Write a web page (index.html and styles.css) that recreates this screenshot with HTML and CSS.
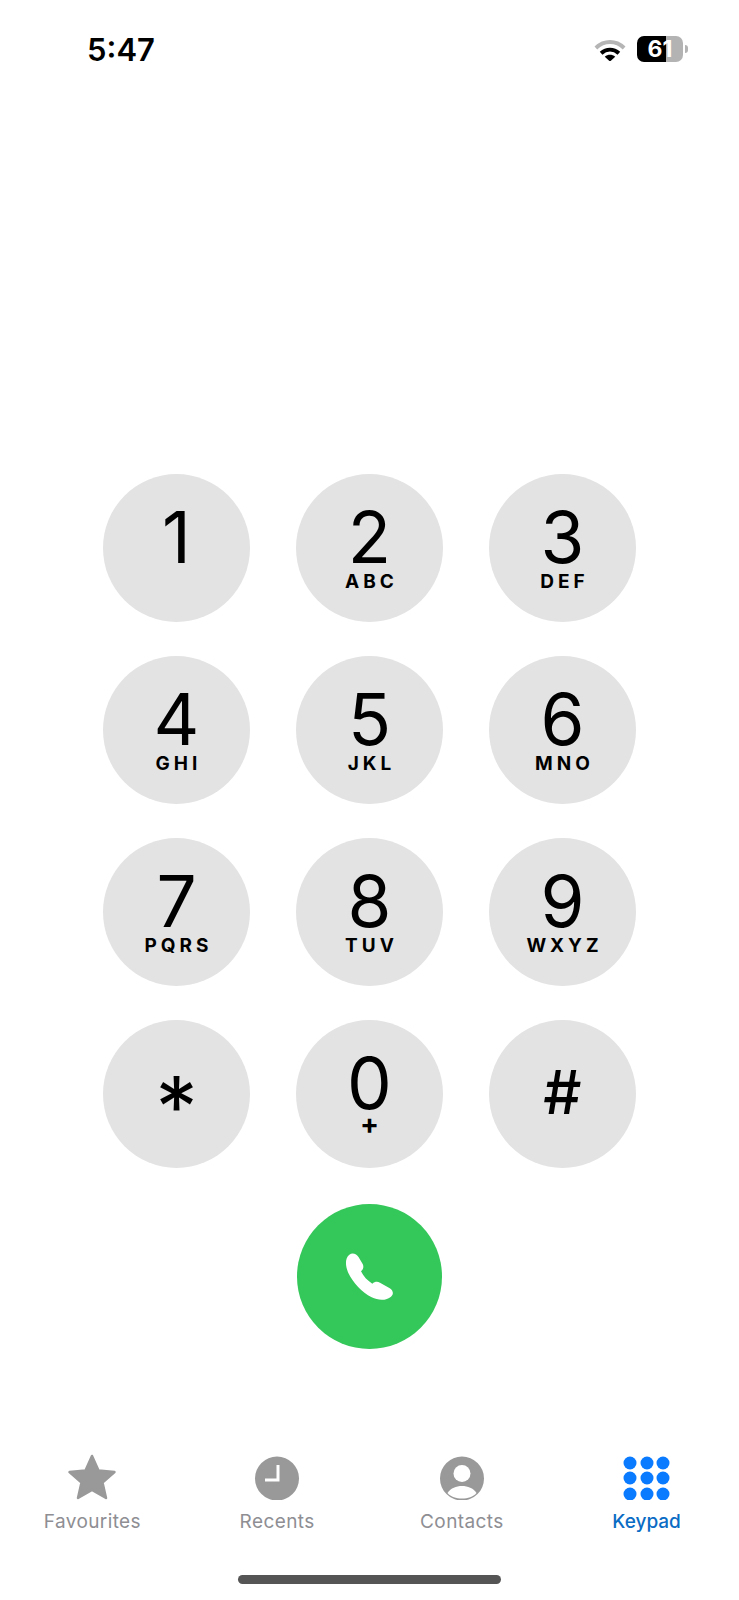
FILE: index.html
```html
<!DOCTYPE html>
<html lang="en">
<head>
    <title>Keypad</title>
    <meta charset="utf-8"/>
    <link rel="stylesheet" href="styles.css">
</head>
<body>

<div class="status-bar">
    <span class="time">5:47</span>
    <div class="status-icons">
        <svg class="wifi" viewBox="0 0 30 22">
            <path d="M1.500 9.500C9.500 2 20.500 2 28.500 9.500" fill="none" stroke="#b5b5b5" stroke-width="3.800"/>
            <path d="M6.500 14.500C11.500 10 18.500 10 23.500 14.500" fill="none" stroke="#000" stroke-width="3.800"/>
            <path d="M10 18C13 15.500 17 15.500 20 18L15 22.500z" fill="#000"/>
        </svg>
        <div class="battery">61</div>
        <span class="battery-nub"></span>
    </div>
</div>

<div class="keypad">
    <button class="key"><span class="digit">1</span></button>
    <button class="key"><span class="digit">2</span><span class="letters">ABC</span></button>
    <button class="key"><span class="digit">3</span><span class="letters">DEF</span></button>
    <button class="key"><span class="digit">4</span><span class="letters">GHI</span></button>
    <button class="key"><span class="digit">5</span><span class="letters">JKL</span></button>
    <button class="key"><span class="digit">6</span><span class="letters">MNO</span></button>
    <button class="key"><span class="digit">7</span><span class="letters">PQRS</span></button>
    <button class="key"><span class="digit">8</span><span class="letters">TUV</span></button>
    <button class="key"><span class="digit">9</span><span class="letters">WXYZ</span></button>
    <button class="key"><span class="digit star">*</span></button>
    <button class="key"><span class="digit">0</span><span class="letters plus">+</span></button>
    <button class="key"><span class="digit hash">#</span></button>
</div>

<button class="call">
    <svg class="call-icon" viewBox="165 172 150 150">
        <path d="M178 180C188 172 200 178 206 188L218 208C222 216 220 224 213 230C220 245 232 258 247 267C254 261 262 260 270 264L298 280C310 287 312 298 303 306C290 318 265 318 245 308C215 292 190 265 175 235C165 212 165 190 178 180Z" fill="#fff"/>
    </svg>
</button>

<div class="tabs">
    <div class="tab">
        <svg class="tab-icon" viewBox="0 0 50 46">
            <path d="M25 2L31.500 16.500L47.500 18L35.500 28.500L39 44L25 36L11 44L14.500 28.500L2.500 18L18.500 16.500Z" fill="#999" stroke="#999" stroke-width="2.500" stroke-linejoin="round"/>
        </svg>
        <span>Favourites</span>
    </div>
    <div class="tab">
        <svg class="tab-icon" viewBox="0 0 50 46">
            <circle cx="25" cy="24.500" r="22" fill="#999"/>
            <path d="M26 11V26H13" fill="none" stroke="#fff" stroke-width="3"/>
        </svg>
        <span>Recents</span>
    </div>
    <div class="tab">
        <svg class="tab-icon" viewBox="0 0 50 46">
            <circle cx="25" cy="24.500" r="22" fill="#999"/>
            <circle cx="25" cy="19.500" r="8.500" fill="#fff"/>
            <path d="M10.500 39C14 34 19 32 25 32S36 34 39.500 39C36 43 31 44.500 25 44.500S14 43 10.500 39Z" fill="#fff"/>
        </svg>
        <span>Contacts</span>
    </div>
    <div class="tab active">
        <svg class="tab-icon" viewBox="0 0 50 46">
            <g fill="#0a7aff">
                <circle cx="8" cy="9" r="6.500"/><circle cx="25" cy="9" r="6.500"/><circle cx="41" cy="9" r="6.500"/>
                <circle cx="8" cy="24" r="6.500"/><circle cx="25" cy="24" r="6.500"/><circle cx="41" cy="24" r="6.500"/>
                <circle cx="8" cy="40" r="6.500"/><circle cx="25" cy="40" r="6.500"/><circle cx="41" cy="40" r="6.500"/>
            </g>
        </svg>
        <span>Keypad</span>
    </div>
</div>

<div class="home-bar"></div>

</body>
</html>
```

FILE: styles.css
```css
body {
    margin: 0;
    width: 739px;
    height: 1600px;
    overflow: hidden;
    background: #fff;
    color: #000;
    font-family: Inter, "Liberation Sans", sans-serif;
}

button {
    border: none;
    padding: 0;
    font-family: inherit;
    color: inherit;
}

.status-bar {
    display: flex;
    justify-content: space-between;
    align-items: center;
    height: 62px;
    padding: 18px 51px 0 87px;
}

.time {
    font-size: 31px;
    font-weight: 600;
}

.status-icons {
    display: flex;
    align-items: center;
}

.wifi {
    width: 32px;
    height: 23px;
    margin-right: 11px;
}

.battery {
    width: 46px;
    height: 26px;
    border-radius: 7px;
    background: linear-gradient(90deg, #000 63%, #b3b3b3 63%);
    color: #fff;
    font-size: 23px;
    font-weight: 700;
    line-height: 26px;
    text-align: center;
}

.battery-nub {
    width: 3px;
    height: 8px;
    margin-left: 2px;
    border-radius: 0 3px 3px 0;
    background: #b3b3b3;
}

.keypad {
    display: grid;
    grid-template-columns: repeat(3, 147px);
    grid-auto-rows: 148px;
    column-gap: 46px;
    row-gap: 34px;
    justify-content: center;
    margin-top: 394px;
}

.key {
    display: flex;
    flex-direction: column;
    align-items: center;
    padding-top: 27px;
    border-radius: 50%;
    background: #e3e3e3;
}

.digit {
    font-size: 71px;
    font-weight: 400;
    line-height: 72px;
}

.digit.star {
    margin-top: 24px;
    font-size: 84px;
}

.digit.hash {
    margin-top: 9px;
    font-size: 60px;
    font-weight: 500;
}

.letters {
    margin-top: -2px;
    margin-right: -4px;
    font-size: 19px;
    font-weight: 700;
    line-height: 22px;
    letter-spacing: 4px;
}

.letters.plus {
    margin-top: -6px;
    margin-right: 0;
    letter-spacing: 0;
    font-size: 28px;
}

.call {
    display: flex;
    align-items: center;
    justify-content: center;
    width: 145px;
    height: 145px;
    margin: 36px auto 0;
    border-radius: 50%;
    background: #34c759;
}

.call-icon {
    width: 50px;
    height: 50px;
}

.tabs {
    display: grid;
    grid-template-columns: repeat(4, 1fr);
    margin-top: 105px;
}

.tab {
    display: flex;
    flex-direction: column;
    align-items: center;
    color: #8e8e93;
    font-size: 19px;
    letter-spacing: 0.4px;
    line-height: 24px;
}

.tab.active {
    color: #0a6cc4;
    font-weight: 500;
    letter-spacing: 0;
}

.tab-icon {
    width: 50px;
    height: 46px;
    margin-bottom: 10px;
}

.home-bar {
    width: 263px;
    height: 9px;
    margin: 41px auto 0;
    border-radius: 5px;
    background: #555;
}
```
